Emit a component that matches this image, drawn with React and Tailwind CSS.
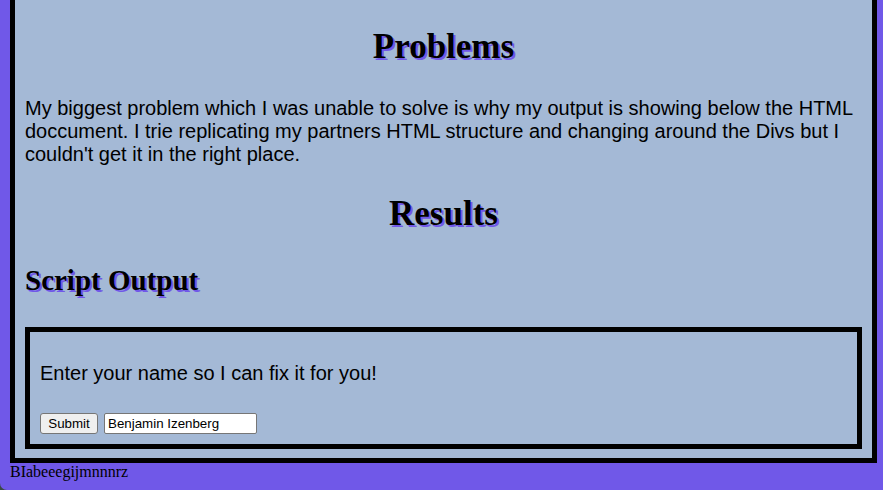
import React from "react";

const serifHead = "font-['Liberation_Serif',_'Times_New_Roman',_serif] font-bold text-black [text-shadow:2px_2px_0_#7058e8]";

const App = () => {
  return (
    <div className="h-[490px] bg-[#3b4a44] overflow-hidden">
      <div className="h-full bg-[#7058e8] rounded-bl-[7px] font-['Liberation_Sans',_Arial,_sans-serif]">
        {/* main box, top edge scrolled out of view */}
        <div className="ml-[10px] w-[867px] border-x-[5px] border-b-[5px] border-black bg-[#a4b9d6] px-[10px] pt-[27px] pb-[9px]">
          <h1 className={`${serifHead} text-[35px] leading-[39px] text-center`}>Problems</h1>

          <p className="mt-[31px] text-[20px] leading-[23px] text-black">
            My biggest problem which I was unable to solve is why my output is showing below the HTML doccument. I trie
            replicating my partners HTML structure and changing around the Divs but I couldn't get it in the right place.
          </p>

          <h1 className={`${serifHead} mt-[28px] text-[35px] leading-[39px] text-center`}>Results</h1>

          <h2 className={`${serifHead} mt-[31px] text-[29px] leading-[33px]`}>Script Output</h2>

          {/* output box */}
          <div className="mt-[30px] border-[5px] border-black px-[10px] pt-[30px] pb-[10px]">
            <p className="text-[20px] leading-[23px] text-black">Enter your name so I can fix it for you!</p>
            <div className="mt-[28px] flex items-center gap-[6px]">
              <button className="w-[58px] h-[21px] bg-[#efefef] border border-[#767676] rounded-[3px] text-[13.33px] leading-none text-black">
                Submit
              </button>
              <input
                type="text"
                defaultValue="Benjamin Izenberg"
                className="w-[153px] h-[21px] bg-white border border-[#767676] rounded-[2px] px-[3px] text-[13.33px] text-black outline-none"
              />
            </div>
          </div>
        </div>

        <div className="ml-[10px] font-['Liberation_Serif',_'Times_New_Roman',_serif] text-[16px] leading-[18px] text-black">
          BIabeeegijmnnnrz
        </div>
      </div>
    </div>
  );
};

export default App;
